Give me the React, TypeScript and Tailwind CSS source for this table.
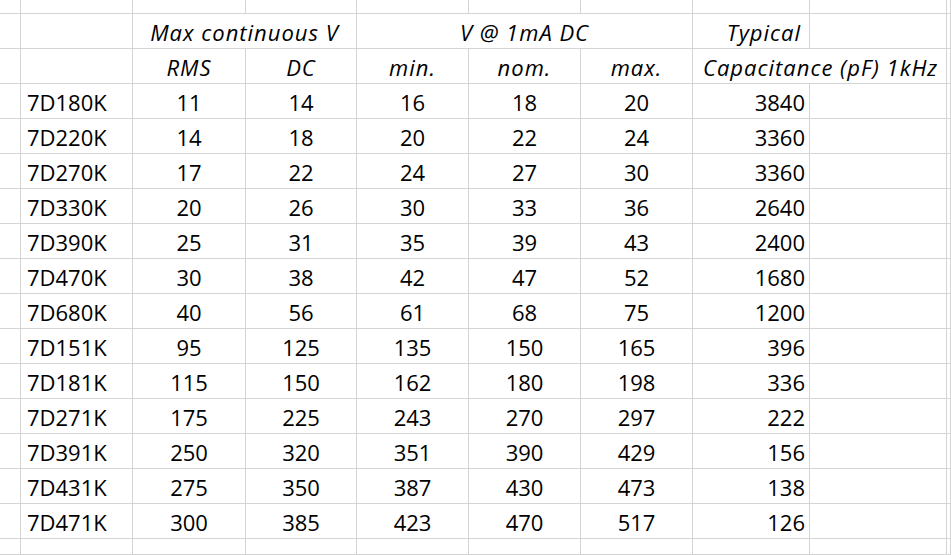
import React from "react";

const rows: [string, string, string, string, string, string, string][] = [
  ["7D180K", "11", "14", "16", "18", "20", "3840"],
  ["7D220K", "14", "18", "20", "22", "24", "3360"],
  ["7D270K", "17", "22", "24", "27", "30", "3360"],
  ["7D330K", "20", "26", "30", "33", "36", "2640"],
  ["7D390K", "25", "31", "35", "39", "43", "2400"],
  ["7D470K", "30", "38", "42", "47", "52", "1680"],
  ["7D680K", "40", "56", "61", "68", "75", "1200"],
  ["7D151K", "95", "125", "135", "150", "165", "396"],
  ["7D181K", "115", "150", "162", "180", "198", "336"],
  ["7D271K", "175", "225", "243", "270", "297", "222"],
  ["7D391K", "250", "320", "351", "390", "429", "156"],
  ["7D431K", "275", "350", "387", "430", "473", "138"],
  ["7D471K", "300", "385", "423", "470", "517", "126"],
];

const cell = "border-r border-b border-[#d4d4d4] flex items-center pt-[1px] whitespace-nowrap overflow-visible";
const hd = " italic tracking-[1px]";

function Empty() {
  return <div className={cell} />;
}

export default function App() {
  return (
    <div
      className="w-[951px] h-[555px] bg-white overflow-hidden text-black text-[22px] leading-none"
      style={{ fontFamily: "'Open Sans', Lato, sans-serif" }}
    >
      <div className="grid grid-cols-[21px_112px_113px_111px_112px_112px_112px_117px_137px_1fr] grid-rows-[14px_repeat(15,35px)_1fr] h-[555px]">
        {/* row 0 */}
        {Array.from({ length: 10 }).map((_, i) => (
          <Empty key={"r0" + i} />
        ))}
        {/* row 1 */}
        <Empty />
        <Empty />
        <div className={cell + " col-span-2 justify-center" + hd}>Max continuous V</div>
        <div className={cell + " col-span-3 justify-center" + hd}>V @ 1mA DC</div>
        <div className={cell + " justify-end pr-[8px]" + hd}>Typical</div>
        <Empty />
        <Empty />
        {/* row 2 */}
        <Empty />
        <Empty />
        <div className={cell + " justify-center" + hd}>RMS</div>
        <div className={cell + " justify-center" + hd}>DC</div>
        <div className={cell + " justify-center" + hd}>min.</div>
        <div className={cell + " justify-center" + hd}>nom.</div>
        <div className={cell + " justify-center" + hd}>max.</div>
        <div className={cell + " col-span-2 pl-[10px]" + hd}>Capacitance (pF) 1kHz</div>
        <Empty />
        {/* data */}
        {rows.map((r) => (
          <React.Fragment key={r[0]}>
            <Empty />
            <div className={cell + " pl-[6px]"}>{r[0]}</div>
            <div className={cell + " justify-center"}>{r[1]}</div>
            <div className={cell + " justify-center"}>{r[2]}</div>
            <div className={cell + " justify-center"}>{r[3]}</div>
            <div className={cell + " justify-center"}>{r[4]}</div>
            <div className={cell + " justify-center"}>{r[5]}</div>
            <div className={cell + " justify-end pr-[4px]"}>{r[6]}</div>
            <Empty />
            <Empty />
          </React.Fragment>
        ))}
        {/* last partial row */}
        {Array.from({ length: 10 }).map((_, i) => (
          <Empty key={"rl" + i} />
        ))}
      </div>
    </div>
  );
}
